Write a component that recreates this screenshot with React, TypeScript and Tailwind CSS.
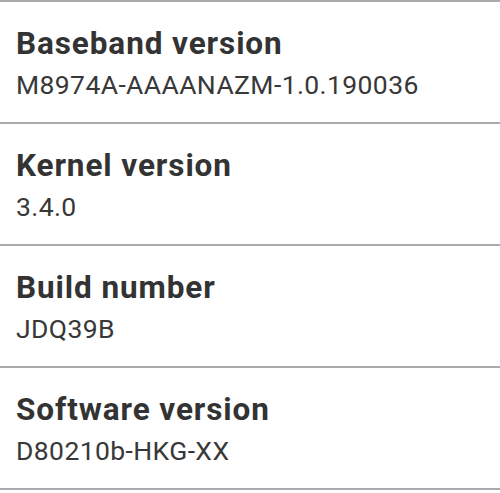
import React from "react";

const items = [
  { title: "Baseband version", value: "M8974A-AAAANAZM-1.0.190036" },
  { title: "Kernel version", value: "3.4.0" },
  { title: "Build number", value: "JDQ39B" },
  { title: "Software version", value: "D80210b-HKG-XX" },
];

const App = () => {
  return (
    <div className="w-[500px] h-[493px] bg-white overflow-hidden" style={{ fontFamily: "Roboto, 'Noto Sans', sans-serif" }}>
      {items.map((item) => (
        <div key={item.title} className="h-[122px] border-t-2 border-[#a9abae] pl-[16px] pt-[24px]">
          <div className="text-[31.5px] leading-[36px] font-bold tracking-[0.9px] text-[#333333]">{item.title}</div>
          <div className="mt-[8px] text-[26.5px] leading-[30px] tracking-[0.4px] text-[#383838]">{item.value}</div>
        </div>
      ))}
      <div className="border-t-2 border-[#a9abae]" />
    </div>
  );
};

export default App;
